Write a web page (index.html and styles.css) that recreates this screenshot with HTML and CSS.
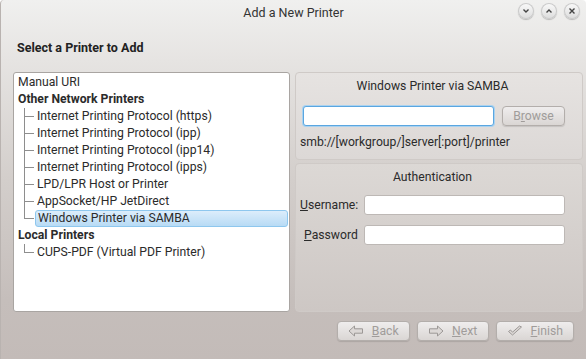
FILE: index.html
```html
<!DOCTYPE html>
<html lang="en">
<head>
    <meta charset="UTF-8">
    <title>Add a New Printer</title>
    <link rel="stylesheet" href="styles.css">
</head>
<body>
    <div class="window">
        <div class="titlebar">
            <div class="title">Add a New Printer</div>
            <div class="controls">
                <span class="ctl"><svg width="14" height="14" viewBox="0 0 14 14"><path d="M4.5 5.5 L7 8 L9.5 5.5" fill="none" stroke="#444" stroke-width="1.4"/></svg></span>
                <span class="ctl"><svg width="14" height="14" viewBox="0 0 14 14"><path d="M4.5 8.5 L7 6 L9.5 8.5" fill="none" stroke="#444" stroke-width="1.4"/></svg></span>
                <span class="ctl"><svg width="14" height="14" viewBox="0 0 14 14"><path d="M4.5 4.5 L9.5 9.5 M9.5 4.5 L4.5 9.5" fill="none" stroke="#444" stroke-width="1.4"/></svg></span>
            </div>
        </div>

        <h1 class="heading">Select a Printer to Add</h1>

        <div class="main">
            <div class="tree">
                <div class="row">Manual URI</div>
                <div class="row group">Other Network Printers</div>
                <div class="row child">Internet Printing Protocol (https)</div>
                <div class="row child">Internet Printing Protocol (ipp)</div>
                <div class="row child">Internet Printing Protocol (ipp14)</div>
                <div class="row child">Internet Printing Protocol (ipps)</div>
                <div class="row child">LPD/LPR Host or Printer</div>
                <div class="row child">AppSocket/HP JetDirect</div>
                <div class="row child last"><span class="selected">Windows Printer via SAMBA</span></div>
                <div class="row group">Local Printers</div>
                <div class="row child last">CUPS-PDF (Virtual PDF Printer)</div>
            </div>

            <div class="side">
                <div class="panel">
                    <div class="panel-title">Windows Printer via SAMBA</div>
                    <div class="uri-row">
                        <div class="input focus"></div>
                        <div class="btn disabled">B<u>r</u>owse</div>
                    </div>
                    <div class="hint">smb://[workgroup/]server[:port]/printer</div>
                </div>
                <div class="panel auth">
                    <div class="panel-title">Authentication</div>
                    <div class="form">
                        <label><u>U</u>sername:</label>
                        <div class="input"></div>
                        <label class="right"><u>P</u>assword</label>
                        <div class="input"></div>
                    </div>
                </div>
            </div>
        </div>

        <div class="footer">
            <div class="btn disabled wide">
                <svg width="16" height="12" viewBox="0 0 16 12"><path d="M1 6 L6.5 1 V3.8 H14.5 V8.2 H6.5 V11 Z" fill="#dcd8d6" stroke="#9c9896" stroke-width="1"/></svg>
                <span><u>B</u>ack</span>
            </div>
            <div class="btn disabled wide">
                <svg width="16" height="12" viewBox="0 0 16 12"><path d="M15 6 L9.5 1 V3.8 H1.5 V8.2 H9.5 V11 Z" fill="#dcd8d6" stroke="#9c9896" stroke-width="1"/></svg>
                <span><u>N</u>ext</span>
            </div>
            <div class="btn disabled wide">
                <svg width="16" height="12" viewBox="0 0 16 12"><path d="M1.5 6.5 L5.5 10 L14.5 2 L12.5 1 L5.5 7.2 L3.5 5 Z" fill="#dcd8d6" stroke="#9c9896" stroke-width="1"/></svg>
                <span><u>F</u>inish</span>
            </div>
        </div>
    </div>
</body>
</html>
```

FILE: styles.css
```css
html, body {
    margin: 0;
    padding: 0;
}

body {
    font-family: Roboto, "Noto Sans", sans-serif;
    font-size: 12.2px;
    color: #2b2b2b;
}

.window {
    width: 586px;
    height: 359px;
    box-sizing: border-box;
    background: linear-gradient(to bottom, #f0f0ef 0px, #e6e4e2 60px, #d3cecb 180px, #c5bebb 300px, #c3bbb8 359px);
    border-left: 1px solid #b9b3b0;
    border-radius: 4px 4px 0 0;
    display: flex;
    flex-direction: column;
}

.titlebar {
    height: 24px;
    position: relative;
    display: flex;
    align-items: center;
    justify-content: center;
}

.title {
    font-size: 12.5px;
    color: #333;
    padding-top: 1px;
}

.controls {
    position: absolute;
    right: 6px;
    top: 3px;
    display: flex;
    gap: 7px;
}

.ctl {
    width: 16px;
    height: 16px;
    border-radius: 50%;
    background: linear-gradient(to bottom, #fafafa, #dcdcdc);
    box-shadow: 0 1px 1px rgba(0, 0, 0, 0.22), inset 0 0 0 1px #cacaca;
    display: flex;
    align-items: center;
    justify-content: center;
}

.heading {
    margin: 16px 0 0 16px;
    font-size: 12.5px;
    font-weight: bold;
    color: #222;
    height: 16px;
    line-height: 16px;
}

.main {
    display: flex;
    gap: 5px;
    margin: 16px 0 0 12px;
    height: 240px;
}

.tree {
    width: 275px;
    background: #fff;
    border: 1px solid #a9a5a2;
    border-radius: 3px;
    padding: 1px 0 0 0;
}

.row {
    height: 17px;
    line-height: 17px;
    padding-left: 4px;
    white-space: nowrap;
    position: relative;
}

.group {
    font-weight: bold;
}

.child {
    padding-left: 23px;
}

.child::before {
    content: "";
    position: absolute;
    left: 10px;
    top: 0;
    bottom: 0;
    border-left: 1px solid #8e8e8e;
}

.child.last::before {
    bottom: 8px;
}

.child::after {
    content: "";
    position: absolute;
    left: 10px;
    top: 8px;
    width: 10px;
    border-top: 1px solid #8e8e8e;
}

.selected {
    display: block;
    margin-left: -2px;
    margin-right: 1px;
    padding-left: 2px;
    height: 15px;
    line-height: 15px;
    border: 1px solid #8ec7ee;
    border-radius: 3px;
    background: linear-gradient(to bottom, #dcedfb, #b8dbf5);
}

.side {
    width: 288px;
    display: flex;
    flex-direction: column;
    gap: 3px;
}

.panel {
    border: 1px solid #cfcac7;
    border-radius: 4px;
    background: linear-gradient(to bottom, #e6e3e1, #dcd8d6);
    padding: 0 17px 0 4px;
    height: 88px;
    box-sizing: border-box;
}

.panel.auth {
    flex: 1;
    background: linear-gradient(to bottom, #dcd8d5, #cdc7c4);
}

.panel-title {
    text-align: center;
    height: 26px;
    line-height: 26px;
}

.uri-row {
    display: flex;
    gap: 8px;
    margin-top: 7px;
    margin-left: 3px;
}

.input {
    height: 18px;
    background: #fff;
    border: 1px solid #bdb8b5;
    border-radius: 3px;
    box-sizing: content-box;
}

.uri-row .input {
    width: 189px;
}

.input.focus {
    border: 1px solid #5aa6e0;
    box-shadow: 0 0 0 1px #a9d2f0;
}

.btn {
    height: 18px;
    line-height: 18px;
    border: 1px solid #b3aeab;
    border-radius: 4px;
    background: linear-gradient(to bottom, #efeded, #dad6d4);
    box-shadow: 0 1px 1px rgba(0, 0, 0, 0.12);
    text-align: center;
    color: #333;
}

.btn.disabled {
    color: #a09c9a;
}

.uri-row .btn {
    flex: 1;
}

.hint {
    margin-top: 8px;
    height: 16px;
    line-height: 16px;
}

.form {
    display: grid;
    grid-template-columns: 64px 1fr;
    row-gap: 10px;
    align-items: center;
    margin-top: 5px;
}

.form .input {
    height: 18px;
}

.form label {
    white-space: nowrap;
}

.form label.right {
    padding-left: 4px;
}

.footer {
    display: flex;
    justify-content: flex-end;
    gap: 7px;
    margin: 9px 12px 0 0;
}

.btn.wide {
    display: flex;
    align-items: center;
    justify-content: center;
    gap: 8px;
    padding: 0 10px;
    min-width: 50px;
}
```
